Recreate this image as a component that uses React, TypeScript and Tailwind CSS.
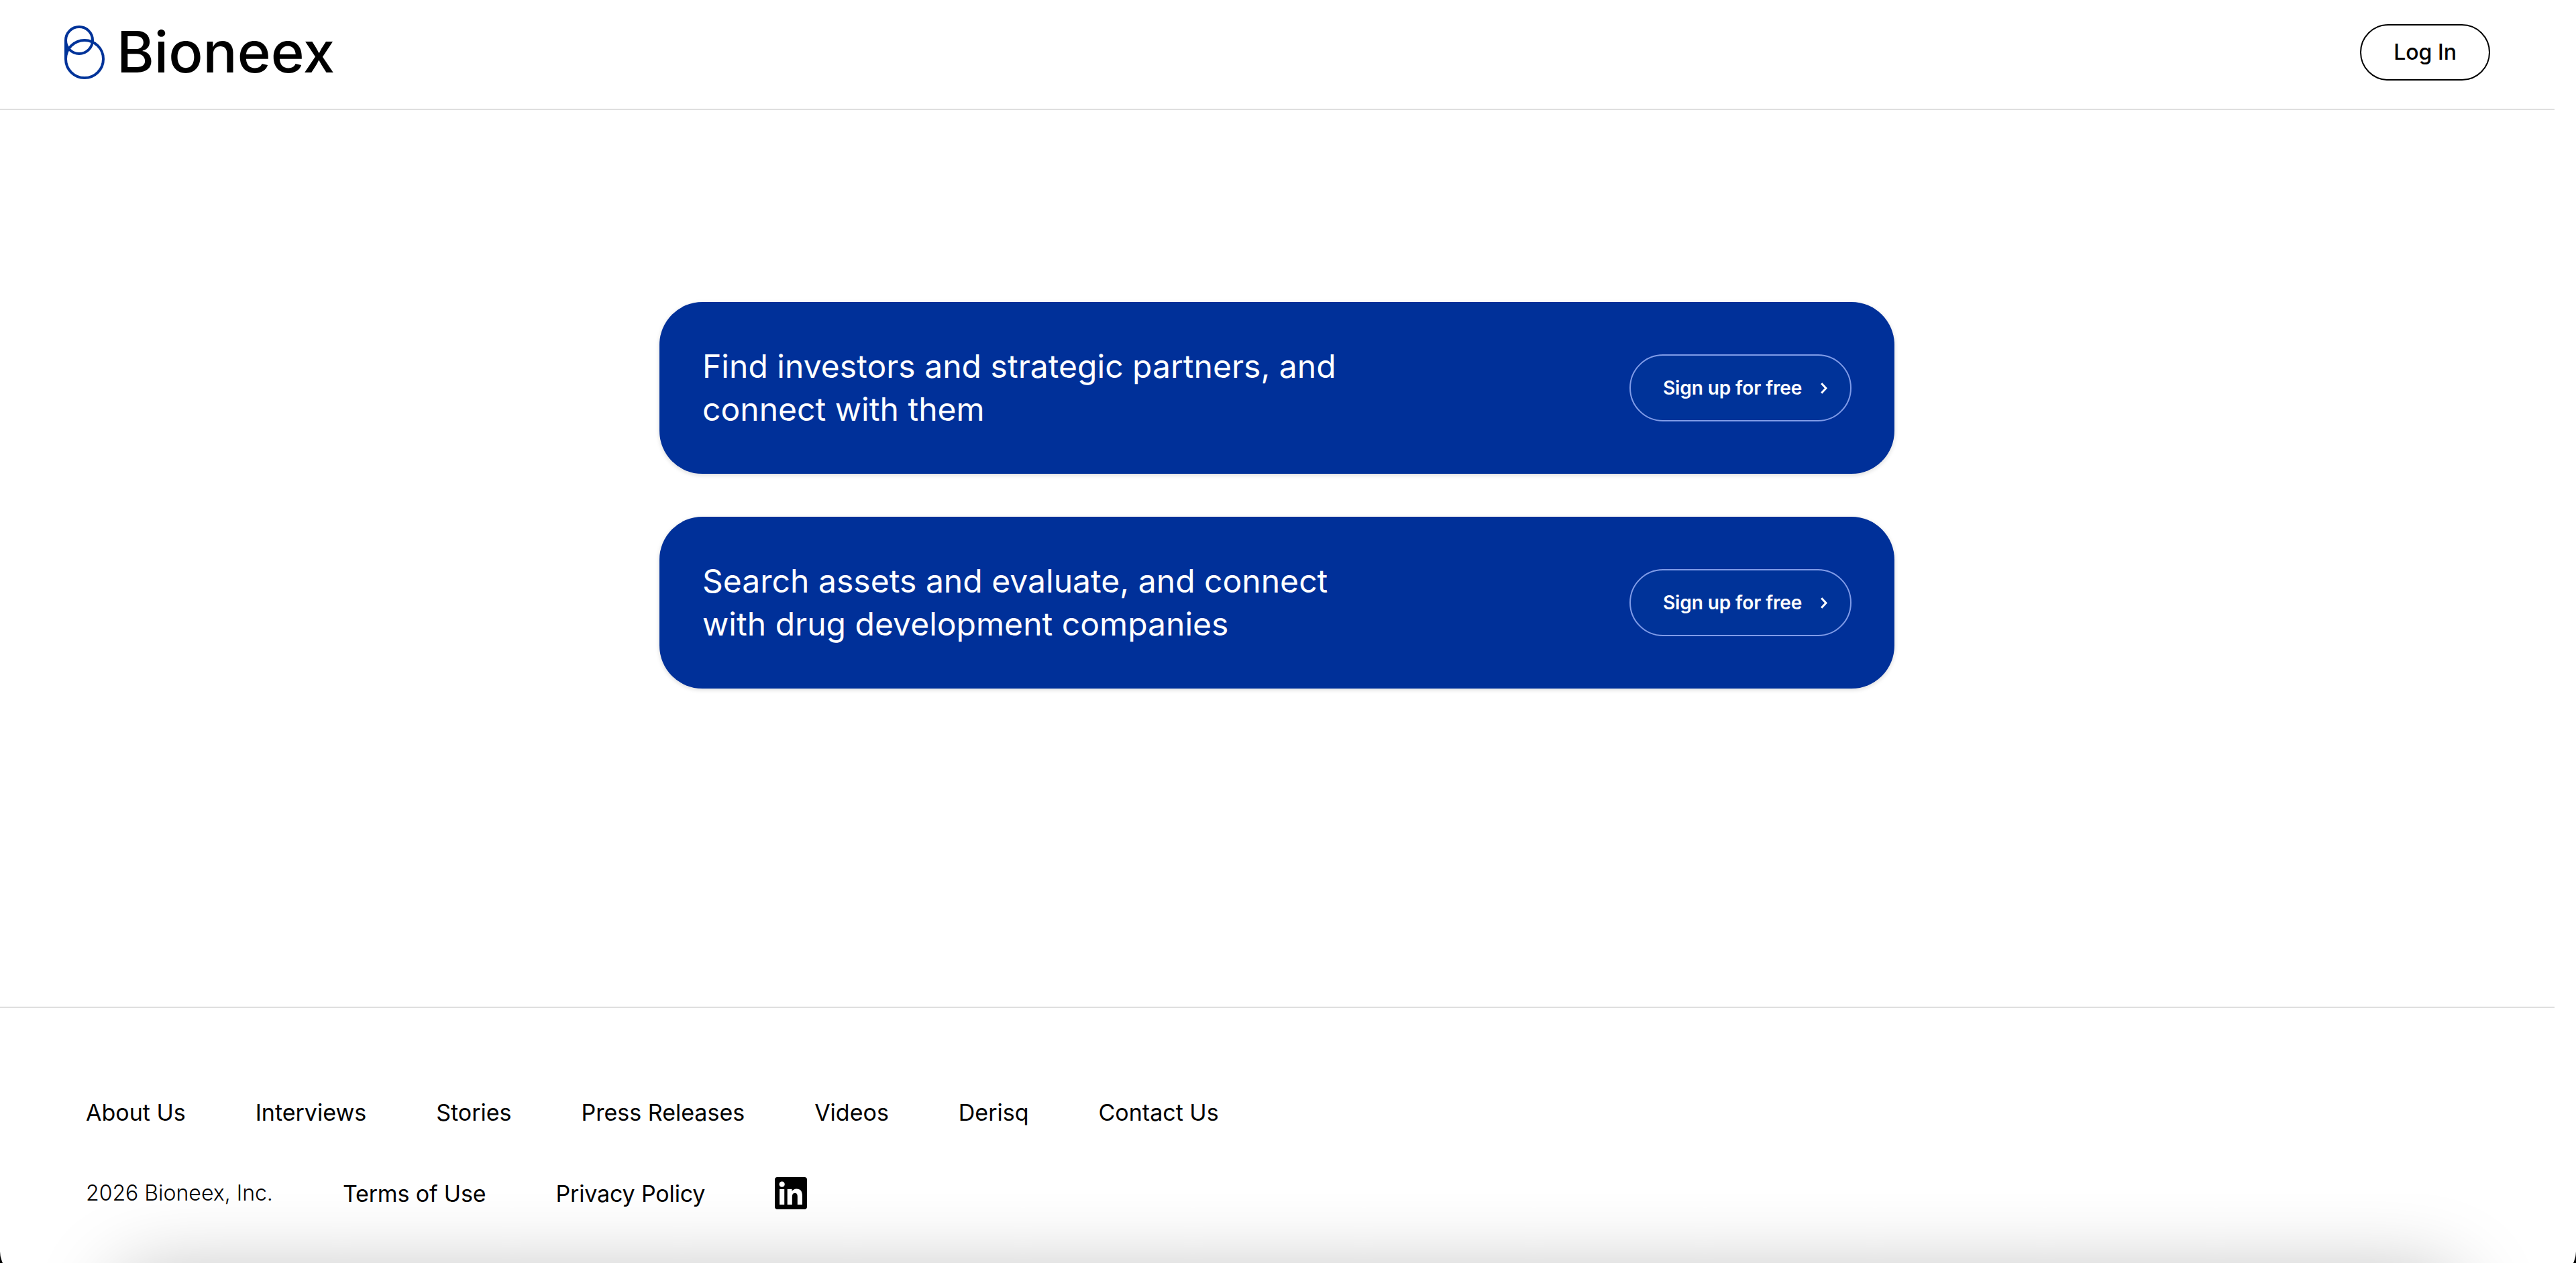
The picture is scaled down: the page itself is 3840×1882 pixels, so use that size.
interface CardType {
  lines: string[];
}

const links = ["About Us", "Interviews", "Stories", "Press Releases", "Videos", "Derisq", "Contact Us"]

const Logo = () => {
  return <div className="flex items-center">
    <svg className="w-[60px] h-20" viewBox="0 0 60 80" fill="none" stroke="#003399" strokeWidth="4">
      <circle cx="22" cy="22" r="20" />
      <circle cx="30" cy="50" r="28" />
      <path d="M2 22V50" />
    </svg>
    <span className="ml-[18px] text-[85px] leading-20 font-medium">Bioneex</span>
  </div>
}

const LinkedinIcon = () => {
  return <svg className="w-12 h-12" viewBox="0 0 24 24" fill="black">
    <path d="M20.447 20.452h-3.554v-5.569c0-1.328-.027-3.037-1.852-3.037-1.853 0-2.136 1.445-2.136 2.939v5.667H9.351V9h3.414v1.561h.046c.477-.9 1.637-1.85 3.37-1.85 3.601 0 4.267 2.37 4.267 5.455v6.286zM5.337 7.433c-1.144 0-2.063-.926-2.063-2.065 0-1.138.92-2.063 2.063-2.063 1.14 0 2.064.925 2.064 2.063 0 1.139-.925 2.065-2.064 2.065zm1.782 13.019H3.555V9h3.564v11.452zM22.225 0H1.771C.792 0 0 .774 0 1.729v20.542C0 23.227.792 24 1.771 24h20.451C23.2 24 24 23.227 24 22.271V1.729C24 .774 23.2 0 22.222 0h.003z" />
  </svg>
}

const Header = () => {
  return <header className="flex items-start justify-between h-[164px] pl-24 pr-24 border-b-2 border-[#dfdfdf]">
    <div className="pt-[38px]">
      <Logo />
    </div>
    <button className="mt-9 w-[194px] h-[84px] rounded-full border-2 border-black text-[32px] font-medium">Log In</button>
  </header>
}

const SignupButton = () => {
  return <button className="flex items-center justify-between w-[331px] h-[100px] pl-12 pr-[34px] rounded-full border-2 border-[#809ce8] bg-[#003399] text-[28px] font-semibold text-white">
    <span className="tracking-[-0.1px]">Sign up for free</span>
    <svg className="w-[10px] h-[17px]" viewBox="0 0 10 17" fill="none" stroke="white" strokeWidth="3">
      <path d="M1.2 1.2L8 8.5L1.2 15.8" />
    </svg>
  </button>
}

const Card = ({ lines }: CardType) => {
  return <div className="flex items-center justify-between w-[1841px] h-64 px-16 rounded-[64px] bg-[#003099] shadow-[0_2px_6px_rgba(0,0,0,0.15)]">
    <p className="text-5xl leading-16 tracking-[0.03px] text-white">
      {lines.map((line) => <span key={line} className="block whitespace-nowrap">{line}</span>)}
    </p>
    <SignupButton />
  </div>
}

const Footer = () => {
  return <footer className="h-[382px] pl-32 border-t-2 border-[#dfdfdf] text-[34px]">
    <div className="flex items-center gap-[104px] h-12 mt-[131px]">
      {links.map((link) => <a key={link}>{link}</a>)}
    </div>
    <div className="flex items-center gap-[104px] h-12 mt-[73px]">
      <span className="text-[32px] font-light">2026 Bioneex, Inc.</span>
      <a className="tracking-[-0.15px]">Terms of Use</a>
      <a className="tracking-[-0.15px]">Privacy Policy</a>
      <LinkedinIcon />
    </div>
  </footer>
}

export default function App() {
  return <div className="relative h-[1882px] overflow-hidden bg-black font-['Inter',sans-serif] text-black">
    <div className="h-[1903px] rounded-b-[38px] bg-white">
      <div className="w-[3808px]">
        <Header />
        <main className="flex flex-col items-center gap-16 h-[1336px] pt-[286px] pr-px">
          <Card lines={["Find investors and strategic partners, and", "connect with them"]} />
          <Card lines={["Search assets and evaluate, and connect", "with drug development companies"]} />
        </main>
        <Footer />
      </div>
    </div>
    {/* soft shadow rising from below the window */}
    <div className="absolute left-[170px] right-[170px] top-[1898px] h-40 rounded-[60px] shadow-[0_0_120px_rgba(0,0,0,0.27)]"></div>
  </div>
}
